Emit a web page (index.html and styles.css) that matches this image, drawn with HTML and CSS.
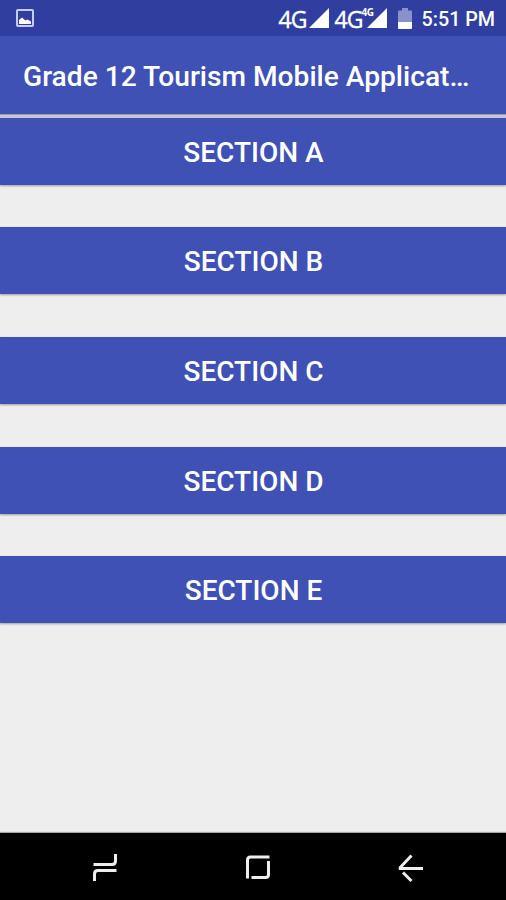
FILE: index.html
```html
<!DOCTYPE html>
<html lang="en">
<head>
    <meta charset="UTF-8">
    <meta name="viewport" content="width=device-width, initial-scale=1.0">
    <title>Grade 12 Tourism Mobile Application</title>
    <link rel="stylesheet" href="styles.css">
</head>
<body>
    <div class="status-bar">
        <svg class="icon-picture" width="18" height="18" viewBox="0 0 18 18">
            <rect x="1" y="1" width="16" height="16" rx="1" fill="none" stroke="#c5cdf5" stroke-width="2"/>
            <path d="M3 15V11l3-2.5 3.5 3 2-1 3.5 2V15z" fill="#fff"/>
        </svg>
        <div class="status-icons">
            <span class="network">4G</span>
            <svg class="signal" width="20" height="20" viewBox="0 0 20 20"><path d="M0 20L20 0v20z"/></svg>
            <span class="network second">4G</span>
            <span class="network-small">4G</span>
            <svg class="signal" width="20" height="20" viewBox="0 0 20 20"><path d="M0 20L20 0v20z"/></svg>
            <svg class="battery" width="14" height="21" viewBox="0 0 14 21">
                <path d="M0 3.5Q0 2.5 1 2.5H4V0H10V2.5H13Q14 2.5 14 3.5V14H0z" fill="#8891cc"/>
                <path d="M0 14H14V20Q14 21 13 21H1Q0 21 0 20z" fill="#fff"/>
            </svg>
            <span class="clock">5:51 PM</span>
        </div>
    </div>
    <header class="app-bar">
        <h1>Grade 12 Tourism Mobile Applicat…</h1>
    </header>
    <main class="sections">
        <button>SECTION A</button>
        <button>SECTION B</button>
        <button>SECTION C</button>
        <button>SECTION D</button>
        <button>SECTION E</button>
    </main>
    <nav class="nav-bar">
        <svg width="26" height="30" viewBox="0 0 26 30">
            <path d="M1.5 12.5H20Q23.5 12.5 23.5 9V2M24.5 18.5H6Q2.5 18.5 2.5 22V29"/>
        </svg>
        <svg width="26" height="30" viewBox="0 0 26 30">
            <path d="M2.5 26.5V8Q2.5 5 5.5 5H24.5M23.5 9V22.5Q23.5 25.5 20.5 25.5H6.5"/>
        </svg>
        <svg width="26" height="30" viewBox="0 0 26 30">
            <path d="M13.5 3.5L2.2 15.5V16.5H25M5 20.5L13.5 29"/>
        </svg>
    </nav>
</body>
</html>
```

FILE: styles.css
```css
* {
    margin: 0;
    padding: 0;
    box-sizing: border-box;
}

body {
    height: 100vh;
    display: flex;
    flex-direction: column;
    overflow: hidden;
    background: #eee;
    color: #fff;
    font-family: Roboto, sans-serif;
}

.status-bar {
    height: 36px;
    flex-shrink: 0;
    display: flex;
    justify-content: space-between;
    padding: 0 11px 0 16px;
    background: #303f9f;
}

.icon-picture {
    margin-top: 9px;
}

.status-icons {
    display: flex;
    align-items: flex-start;
    white-space: nowrap;
}

.network {
    width: 30px;
    font: 23px/38px "Open Sans", sans-serif;
    letter-spacing: -1px;
    -webkit-text-stroke: 0.4px #fff;
}

.network.second {
    margin-left: 6px;
    width: 27px;
}

.network-small {
    width: 5px;
    font: bold 10px/25px "Open Sans", sans-serif;
    letter-spacing: -0.5px;
}

.signal {
    margin-top: 8px;
    fill: #fff;
}

.battery {
    margin: 8px 10px 0 11px;
}

.clock {
    font-size: 19.7px;
    font-weight: 500;
    line-height: 39px;
}

.app-bar {
    height: 78px;
    flex-shrink: 0;
    padding: 0 23px;
    background: #3f51b5;
}

h1 {
    white-space: nowrap;
    font-size: 28.15px;
    font-weight: 500;
    line-height: 82px;
}

.sections {
    flex: 1;
    display: flex;
    flex-direction: column;
    gap: 42.6px;
    padding-top: 2.8px;
    border-top: 1px solid #9499bd;
    background: linear-gradient(#c8c8d4 3px, #eee 3px);
}

button {
    height: 67px;
    padding-left: 1px;
    border: none;
    background: #3f51b5;
    box-shadow: 0 1px 2px rgba(0, 0, 0, 0.35);
    color: #fff;
    font-family: inherit;
    font-size: 28px;
    font-weight: 500;
    line-height: 70px;
}

.nav-bar {
    height: 67px;
    flex-shrink: 0;
    display: flex;
    justify-content: space-between;
    padding: 19px 82px 0 92px;
    background: #000;
    box-shadow: 0 -1px 1px rgba(0, 0, 0, 0.3);
}

.nav-bar svg {
    fill: none;
    stroke: #eee;
    stroke-width: 3;
}
```
